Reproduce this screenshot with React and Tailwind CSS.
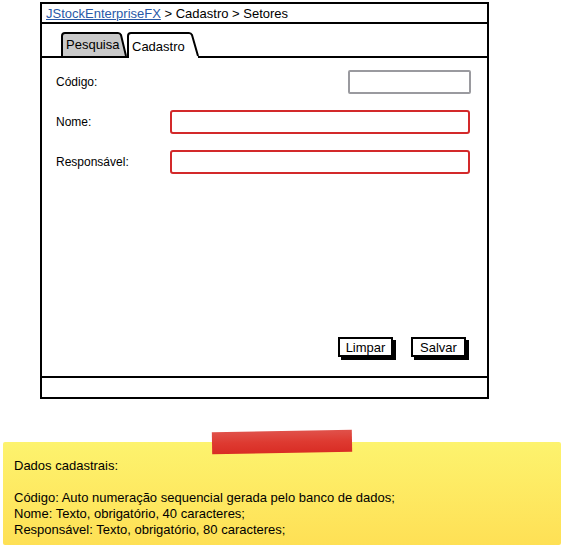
import React from "react";

const font = { fontFamily: '"Liberation Sans", Arial, sans-serif' };

function Tab({ label, active, width }) {
  const h = active ? 26 : 24;
  const w = width;
  const d = active
    ? `M1,${h} L1,4 Q1,1 4,1 L${w - 10},1 Q${w - 8},1 ${w - 7},3 L${w - 1},${h - 2}`
    : `M1,${h} L1,4 Q1,1 4,1 L${w - 9},1 Q${w - 7},1 ${w - 6},3 L${w - 1},${h}`;
  return (
    <div className={`relative flex items-start ${active ? "h-[26px] -mb-[2px] z-10" : "h-[24px]"}`} style={{ width: w }}>
      <svg className="absolute inset-0" width={w} height={h} viewBox={`0 0 ${w} ${h}`}>
        <path d={d + (active ? ` L${w - 1},${h} Z` : " Z")} fill={active ? "#ffffff" : "#c9c9c9"} stroke="none" />
        <path d={d} fill="none" stroke="#000" strokeWidth="2" strokeLinejoin="round" />
      </svg>
      <span className={`relative pl-[5px] text-[13px] leading-none text-black ${active ? "pt-[8px]" : "pt-[6px]"}`}>{label}</span>
    </div>
  );
}

function Button({ children }) {
  return (
    <div className="relative w-[55px] h-[20px]">
      <div className="absolute left-[3px] top-[3px] w-[55px] h-[20px] bg-black" />
      <div className="relative w-[55px] h-[20px] bg-white border-2 border-black flex items-center justify-center text-[13px] leading-none text-black">
        {children}
      </div>
    </div>
  );
}

export default function App() {
  return (
    <div className="relative w-[564px] h-[547px] bg-white overflow-hidden" style={font}>
      <div className="pt-[2px] pl-[40px]">
        <div className="w-[449px] h-[397px] border-2 border-black flex flex-col">
          <div className="h-[20px] border-b-2 border-black flex items-center px-[4px] text-[13px] text-black leading-none">
            <span className="text-[#2a5aa8] underline decoration-[#2a5aa8]">JStockEnterpriseFX</span>
            <span>&nbsp;&gt; Cadastro &gt; Setores</span>
          </div>
          <div className="h-[34px] border-b-2 border-black flex items-end pl-[19px]">
            <Tab label="Pesquisa" width={66} />
            <Tab label="Cadastro" active width={72} />
          </div>
          <div className="flex-1 flex flex-col">
            <div className="flex flex-col gap-[16px] pt-[12px] pl-[14px] pr-[16px] text-[12px] text-black">
              <div className="flex items-center justify-between h-[24px]">
                <span>Código:</span>
                <div className="w-[123px] h-[24px] border-2 border-[#9a9a9f] rounded-[2px] bg-white" />
              </div>
              <div className="flex items-center justify-between h-[24px]">
                <span>Nome:</span>
                <div className="w-[300px] h-[24px] border-2 border-[#d3292a] rounded-[3px] bg-white mr-[1px]" />
              </div>
              <div className="flex items-center justify-between h-[24px]">
                <span>Responsável:</span>
                <div className="w-[300px] h-[24px] border-2 border-[#d3292a] rounded-[3px] bg-white mr-[1px]" />
              </div>
            </div>
            <div className="mt-auto flex justify-end gap-[18px] pr-[21px] pb-[19px]">
              <Button>Limpar</Button>
              <Button>Salvar</Button>
            </div>
          </div>
          <div className="h-[21px] border-t-2 border-black" />
        </div>
      </div>

      <div className="mt-[43px] mx-[3px] h-[103px] bg-gradient-to-b from-[#fdf36e] to-[#fee055] rounded-[2px] pt-[16px] pl-[11px] text-[13px] leading-[16px] text-black">
        <div>Dados cadastrais:</div>
        <div>&nbsp;</div>
        <div>Código: Auto numeração sequencial gerada pelo banco de dados;</div>
        <div>Nome: Texto, obrigatório, 40 caracteres;</div>
        <div>Responsável: Texto, obrigatório, 80 caracteres;</div>
      </div>

      <div className="absolute left-[212px] top-[431px] w-[140px] h-[22px] -rotate-1 bg-gradient-to-b from-[#e0514a] via-[#de3a31] to-[#d92c24]" />
    </div>
  );
}
